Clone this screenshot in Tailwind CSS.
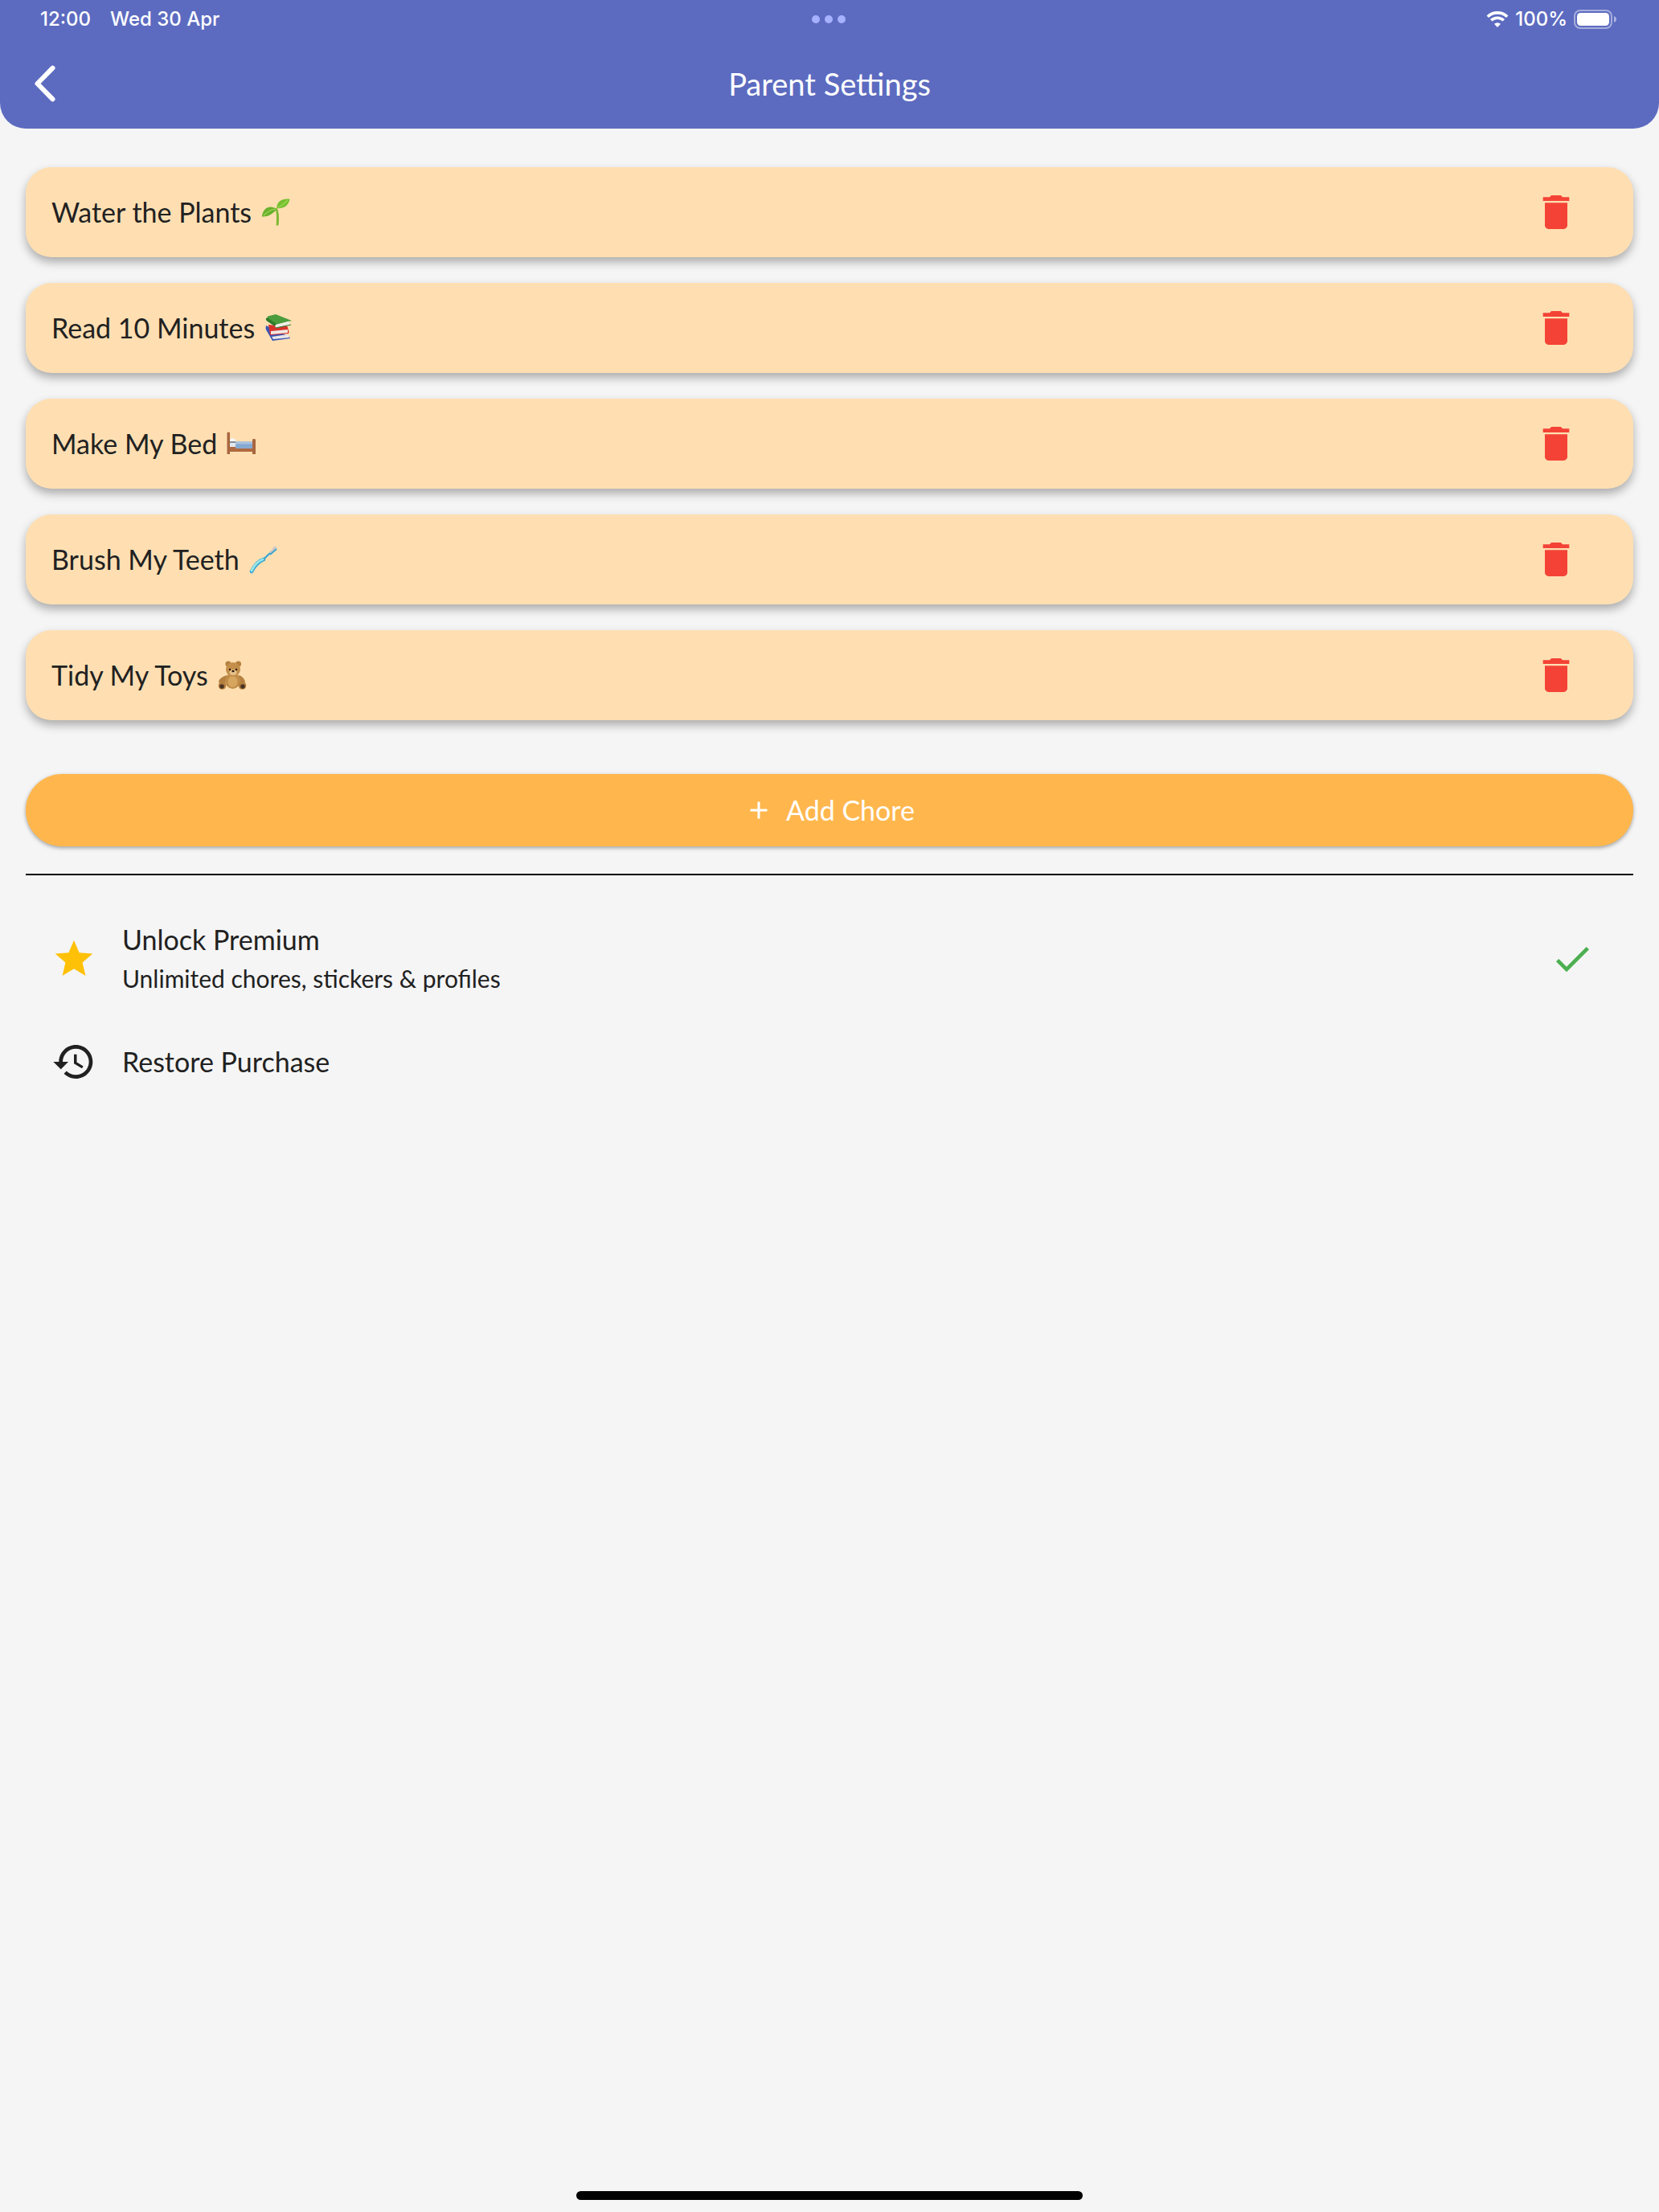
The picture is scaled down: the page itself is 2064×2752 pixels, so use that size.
<!DOCTYPE html>
<html lang="en">
<head>
<meta charset="utf-8">
<meta name="viewport" content="width=device-width, initial-scale=1">
<title>Parent Settings</title>
<script src="https://cdn.jsdelivr.net/npm/@tailwindcss/browser@4"></script>
</head>
<body class="flex min-h-screen flex-col bg-[#f5f5f5] font-['Lato',sans-serif] text-[34px] leading-10 text-[#212121]">

<svg class="hidden" aria-hidden="true">
  <symbol id="trash" viewBox="0 0 24 24"><path d="M6 19c0 1.1.9 2 2 2h8c1.100 0 2-.9 2-2V7H6v12zM19 4h-3.500l-1-1h-5l-1 1H5v2h14V4z"/></symbol>
</svg>

<header class="rounded-b-[32px] bg-[#5c6bc0] text-white">
  <div class="grid h-12 grid-cols-3 items-center pl-[50px] pr-[52px] font-['Inter',sans-serif] text-2xl font-medium">
    <div class="flex gap-6"><span>12:00</span><span>Wed 30 Apr</span></div>
    <div class="flex justify-center gap-1.5" aria-hidden="true">
      <span class="size-2.5 rounded-full bg-[#a6b1ff]"></span>
      <span class="size-2.5 rounded-full bg-[#a6b1ff]"></span>
      <span class="size-2.5 rounded-full bg-[#a6b1ff]"></span>
    </div>
    <div class="flex items-center justify-end gap-2">
      <svg class="h-5 w-7" viewBox="0 0 28 20" fill="none" aria-label="Wi-Fi" role="img">
        <path d="M1.800 6.800a17.500 17.500 0 0 1 24.400 0" stroke="#fff" stroke-width="3.600"/>
        <path d="M6.200 11.300a11.300 11.300 0 0 1 15.600 0" stroke="#fff" stroke-width="3.600"/>
        <path d="M14 20l-4-4.200a5.800 5.800 0 0 1 8 0z" fill="#fff"/>
      </svg>
      <span>100%</span>
      <svg class="h-6 w-[54px]" viewBox="0 0 54 24" aria-label="Battery full" role="img">
        <rect x="1" y="1" width="46" height="22" rx="7" fill="none" stroke="#fff" stroke-opacity=".45" stroke-width="2"/>
        <rect x="4" y="4" width="40" height="16" rx="4.500" fill="#fff"/>
        <path d="M50 8c4 1.400 4 6.600 0 8z" fill="#fff" fill-opacity=".5"/>
      </svg>
    </div>
  </div>
  <div class="grid h-28 grid-cols-[96px_1fr_96px] items-center">
    <button class="flex h-24 items-center pl-10" aria-label="Back">
      <svg class="h-12 w-8" viewBox="0 0 32 48" fill="none"><path d="M25.500 4.700 6.500 24l19 19.300" stroke="#fff" stroke-width="6" stroke-linecap="round" stroke-linejoin="round"/></svg>
    </button>
    <h1 class="text-center text-[38px]">Parent Settings</h1>
  </div>
</header>

<main class="px-8 pt-12">
  <ul class="flex flex-col gap-8">
    <li class="flex h-28 items-center gap-3 rounded-[32px] bg-[#ffdfb2] pl-8 pr-[68px] shadow-[0_6px_12px_rgba(0,0,0,0.3)]">
      <span>Water the Plants</span>
      <svg class="size-9" viewBox="0 0 36 36" role="img" aria-label="Seedling">
        <path d="M19.500 12c2.500 6 3.200 13 2 22-.9.900-2.200.8-2.800 0 .5-8 .6-14-.9-20z" fill="#7cb82f"/>
        <path d="M20 14C10 8 2 13 .8 23.500 10 24 15 19 20 14z" fill="#69b02c"/>
        <path d="M19.500 13C19 4 26 1 35.500 1.500 34 10 28 14 19.500 13z" fill="#76c030"/>
        <path d="M19 14C12 14 7 18 3 22M21 12c4-2 8-5 12-9" stroke="#a5d957" stroke-width="1.200" fill="none"/>
      </svg>
      <button class="ml-auto size-14 text-[#f44336]" aria-label="Delete Water the Plants"><svg class="size-14 fill-current"><use href="#trash"/></svg></button>
    </li>
    <li class="flex h-28 items-center gap-3 rounded-[32px] bg-[#ffdfb2] pl-8 pr-[68px] shadow-[0_6px_12px_rgba(0,0,0,0.3)]">
      <span>Read 10 Minutes</span>
      <svg class="size-9" viewBox="0 0 36 36" role="img" aria-label="Books">
        <path d="M2 15c-1 3 0 6 1 7l7 12 22-3-1-2-12-6z" fill="#3a55b8"/>
        <path d="M9 29l20-3 2 4-20 2z" fill="#e9e6e4"/>
        <path d="M5 14l2 13 23-2 .5-2-2-7z" fill="#d9322c"/>
        <path d="M8 22l21-2v4l-21 2z" fill="#efe9e4"/>
        <path d="M4 3.500 14 1l20 8-20 5-11-6z" fill="#4a9c3d"/>
        <path d="M3 5c-2 2-1 4 1 5l9 6 2-3z" fill="#2f7a2b"/>
        <path d="M14 14l17-4.500c-1 2-.5 3 1 4L15 18c-2-1-2-3-1-4z" fill="#f1eeea"/>
        <path d="M14 18l19-4" stroke="#2f7a2b" stroke-width="1.200"/>
      </svg>
      <button class="ml-auto size-14 text-[#f44336]" aria-label="Delete Read 10 Minutes"><svg class="size-14 fill-current"><use href="#trash"/></svg></button>
    </li>
    <li class="flex h-28 items-center gap-3 rounded-[32px] bg-[#ffdfb2] pl-8 pr-[68px] shadow-[0_6px_12px_rgba(0,0,0,0.3)]">
      <span>Make My Bed</span>
      <svg class="size-9" viewBox="0 0 36 36" role="img" aria-label="Bed">
        <path d="M3 18h30v10H3z" fill="#b06a3f"/>
        <path d="M4 15h9v7H4z" fill="#e3e7ee"/>
        <path d="M4 12.500c3-2 6-1.500 7 1.500l-.5 2H4z" fill="#f7f8fa"/>
        <path d="M4 16h7" stroke="#3d4a5c" stroke-width="1.200"/>
        <path d="M11 15.500h22V24H11z" fill="#86a9d0"/>
        <path d="M11 15.500h22v3H11z" fill="#a8c1dd"/>
        <path d="M.5 4.500c1-1.500 3-1.500 3.500 0V31H.5zM32 13c.6-1.500 3.500-1.500 4 0v18h-4z" fill="#a9673f"/>
      </svg>
      <button class="ml-auto size-14 text-[#f44336]" aria-label="Delete Make My Bed"><svg class="size-14 fill-current"><use href="#trash"/></svg></button>
    </li>
    <li class="flex h-28 items-center gap-3 rounded-[32px] bg-[#ffdfb2] pl-8 pr-[68px] shadow-[0_6px_12px_rgba(0,0,0,0.3)]">
      <span>Brush My Teeth</span>
      <svg class="size-9" viewBox="0 0 36 36" role="img" aria-label="Toothbrush">
        <path d="M3 33C10 23 16 20 24 12l8-8" stroke="#35a5d3" stroke-width="2.200" stroke-linecap="round" fill="none"/>
        <path d="M3 33c4-8 8-13 15-15" stroke="#35a5d3" stroke-width="4.600" stroke-linecap="round" fill="none"/>
        <path d="M3 32c4-8 8-12 14-14" stroke="#9be6e6" stroke-width="2.800" stroke-linecap="round" fill="none"/>
        <path d="M25 10l6-8c2-1 4 1 3 3l-7 6z" fill="#cfc6c4"/>
        <path d="M26 12l8-7" stroke="#35a5d3" stroke-width="1.800"/>
      </svg>
      <button class="ml-auto size-14 text-[#f44336]" aria-label="Delete Brush My Teeth"><svg class="size-14 fill-current"><use href="#trash"/></svg></button>
    </li>
    <li class="flex h-28 items-center gap-3 rounded-[32px] bg-[#ffdfb2] pl-8 pr-[68px] shadow-[0_6px_12px_rgba(0,0,0,0.3)]">
      <span>Tidy My Toys</span>
      <svg class="size-9" viewBox="0 0 36 36" role="img" aria-label="Teddy bear">
        <g fill="#b5803f"><circle cx="13" cy="4" r="3.600"/><circle cx="25.500" cy="4" r="3.600"/><path d="M11 18C6 20 2 22 1 26c1 3 4 3 9 1zM26 18c4 1 7 4 8 8-1 3-5 3-8 1z"/></g>
        <ellipse cx="18.500" cy="25" rx="9.500" ry="10" fill="#c08c48"/>
        <ellipse cx="18.500" cy="26" rx="6" ry="7" fill="#d6a65f"/>
        <circle cx="19" cy="11" r="9" fill="#c48f4a"/>
        <ellipse cx="19" cy="14.500" rx="4.500" ry="3.600" fill="#e6c08a"/>
        <circle cx="15" cy="11" r="1.200" fill="#2a1a10"/><circle cx="23" cy="11" r="1.200" fill="#2a1a10"/>
        <ellipse cx="19" cy="13" rx="1.700" ry="1.200" fill="#2a1a10"/>
        <circle cx="5.500" cy="31" r="4.800" fill="#b5803f"/><circle cx="30.500" cy="31" r="4.800" fill="#b5803f"/>
        <circle cx="5" cy="32" r="2.800" fill="#4b3424"/><circle cx="31" cy="32" r="2.800" fill="#4b3424"/>
      </svg>
      <button class="ml-auto size-14 text-[#f44336]" aria-label="Delete Tidy My Toys"><svg class="size-14 fill-current"><use href="#trash"/></svg></button>
    </li>
  </ul>

  <button class="mt-[67px] flex h-[90px] w-full items-center justify-center gap-4 rounded-full bg-[#ffb74d] text-white shadow-[0_2px_5px_rgba(0,0,0,0.35)]">
    <svg class="size-9 fill-current" viewBox="0 0 24 24" aria-hidden="true"><path d="M19 13h-6v6h-2v-6H5v-2h6V5h2v6h6z"/></svg>
    <span>Add Chore</span>
  </button>

  <hr class="mt-[34px] border-t-2 border-black">

  <section class="px-8 pt-12">
    <button class="flex h-28 w-full items-center gap-8 pr-4 text-left">
      <svg class="size-14 shrink-0 fill-[#ffc107]" viewBox="0 0 24 24" aria-hidden="true"><path d="M12 17.270 18.180 21l-1.640-7.030L22 9.240l-7.190-.61L12 2 9.190 8.630 2 9.240l5.460 4.730L5.820 21z"/></svg>
      <span class="flex grow flex-col gap-2">
        <span>Unlock Premium</span>
        <span class="text-[30px]">Unlimited chores, stickers &amp; profiles</span>
      </span>
      <svg class="size-14 shrink-0 fill-[#4caf50]" viewBox="0 0 24 24" role="img" aria-label="Unlocked"><path d="M9 16.170 4.830 12l-1.420 1.410L9 19 21 7l-1.410-1.410z"/></svg>
    </button>
    <button class="mt-4 flex h-28 w-full items-center gap-8 text-left">
      <svg class="size-14 shrink-0 fill-current" viewBox="0 0 24 24" aria-hidden="true"><path d="M13 3c-4.970 0-9 4.030-9 9H1l3.890 3.890.07.14L9 12H6c0-3.870 3.130-7 7-7s7 3.130 7 7-3.130 7-7 7c-1.930 0-3.680-.79-4.940-2.060l-1.420 1.420C8.270 19.990 10.510 21 13 21c4.970 0 9-4.030 9-9s-4.030-9-9-9zm-1 5v5l4.280 2.540.72-1.210-3.500-2.080V8H12z"/></svg>
      <span>Restore Purchase</span>
    </button>
  </section>
</main>

<div class="mx-auto mb-[15px] mt-auto h-[11px] w-[630px] rounded-full bg-black"></div>
</body>
</html>
